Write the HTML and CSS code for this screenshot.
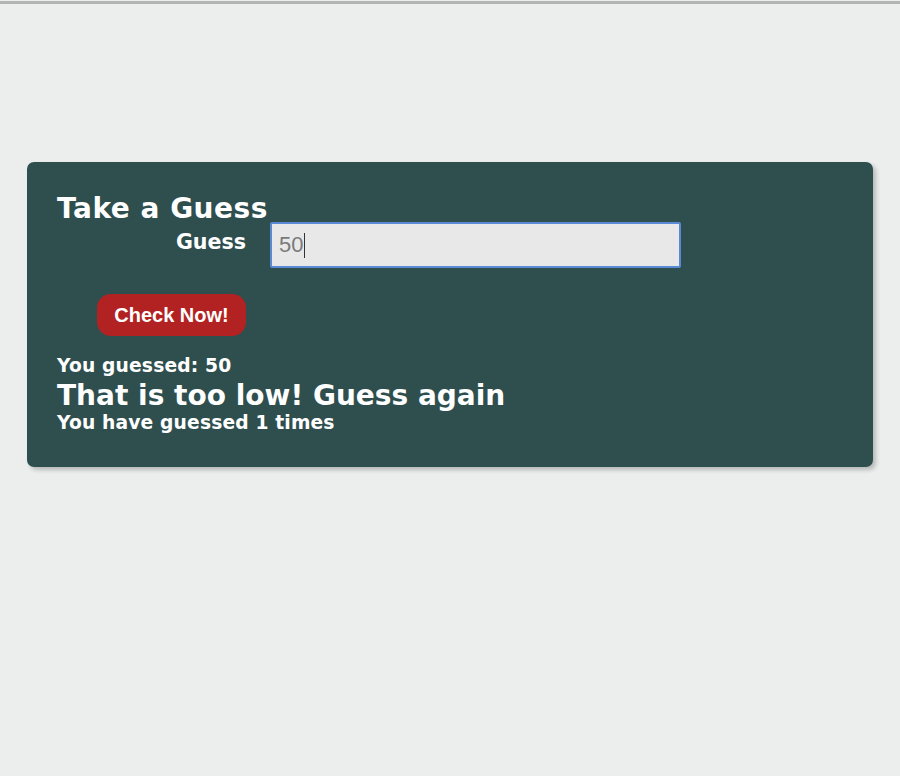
FILE: index.html
```html
<!DOCTYPE html>
<html lang="en">
<head>
  <meta charset="UTF-8">
  <title>Guess the Number</title>
  <link rel="stylesheet" href="styles.css">
</head>
<body>
<div class="topline"></div>

<div class="game">
  <h2 class="title">Take a Guess</h2>

  <div class="guessRow">
    <label class="guessLabel" for="guessField">Guess</label>
    <div class="guessField" id="guessField"><span class="val">50</span><span class="caret"></span></div>
  </div>

  <button class="checkBtn">Check Now!</button>

  <p class="result small">You guessed: 50</p>
  <p class="result big">That is too low! Guess again</p>
  <p class="result small">You have guessed 1 times</p>
</div>
</body>
</html>
```

FILE: styles.css
```css
html {
  box-sizing: border-box;
}

*, *:before, *:after {
  box-sizing: inherit;
}

body {
  margin: 0;
  padding: 0;
  background: #eceeed;
  font-family: "DejaVu Sans", Verdana, sans-serif;
  height: 776px;
}

.topline {
  margin-top: 1px;
  height: 3px;
  background: #b4b4b4;
}

.game {
  margin: 158px 27px 0 27px;
  padding: 33px 30px 34px 30px;
  background: #2f4f4f;
  border-radius: 7px;
  box-shadow: 3px 3px 4px rgba(0,0,0,0.22);
  color: #fff;
}

.title {
  margin: 0 0 -1px 0;
  font-size: 28px;
  line-height: 28px;
  font-weight: bold;
  letter-spacing: 0.5px;
}

.guessRow {
  display: flex;
  align-items: flex-start;
  gap: 24px;
}

.guessLabel {
  width: 189px;
  text-align: right;
  font-size: 20.6px;
  font-weight: bold;
  margin-top: 8px;
}

.guessField {
  width: 411px;
  height: 46px;
  background: #e8e8e8;
  border: 2px solid #5a8ad4;
  border-radius: 2px;
  padding-left: 7px;
  display: flex;
  align-items: center;
  font-family: "Liberation Sans", Arial, sans-serif;
  font-size: 22px;
  color: #7a7a7a;
}

.caret {
  display: inline-block;
  width: 1px;
  height: 25px;
  background: #333;
  margin-left: 1px;
}

.checkBtn {
  display: block;
  margin: 26px 0 0 40px;
  width: 149px;
  height: 42px;
  background: #b22222;
  color: #fff;
  border: none;
  border-radius: 14px;
  font-family: "Liberation Sans", Arial, sans-serif;
  font-weight: bold;
  font-size: 20px;
  padding: 0;
  cursor: pointer;
}

.result {
  margin: 0;
  font-weight: bold;
}

.small {
  font-size: 18.7px;
  letter-spacing: 0.15px;
}

.big {
  font-size: 28px;
  margin-top: 3px;
}

.checkBtn + .result {
  margin-top: 19px;
}
```
